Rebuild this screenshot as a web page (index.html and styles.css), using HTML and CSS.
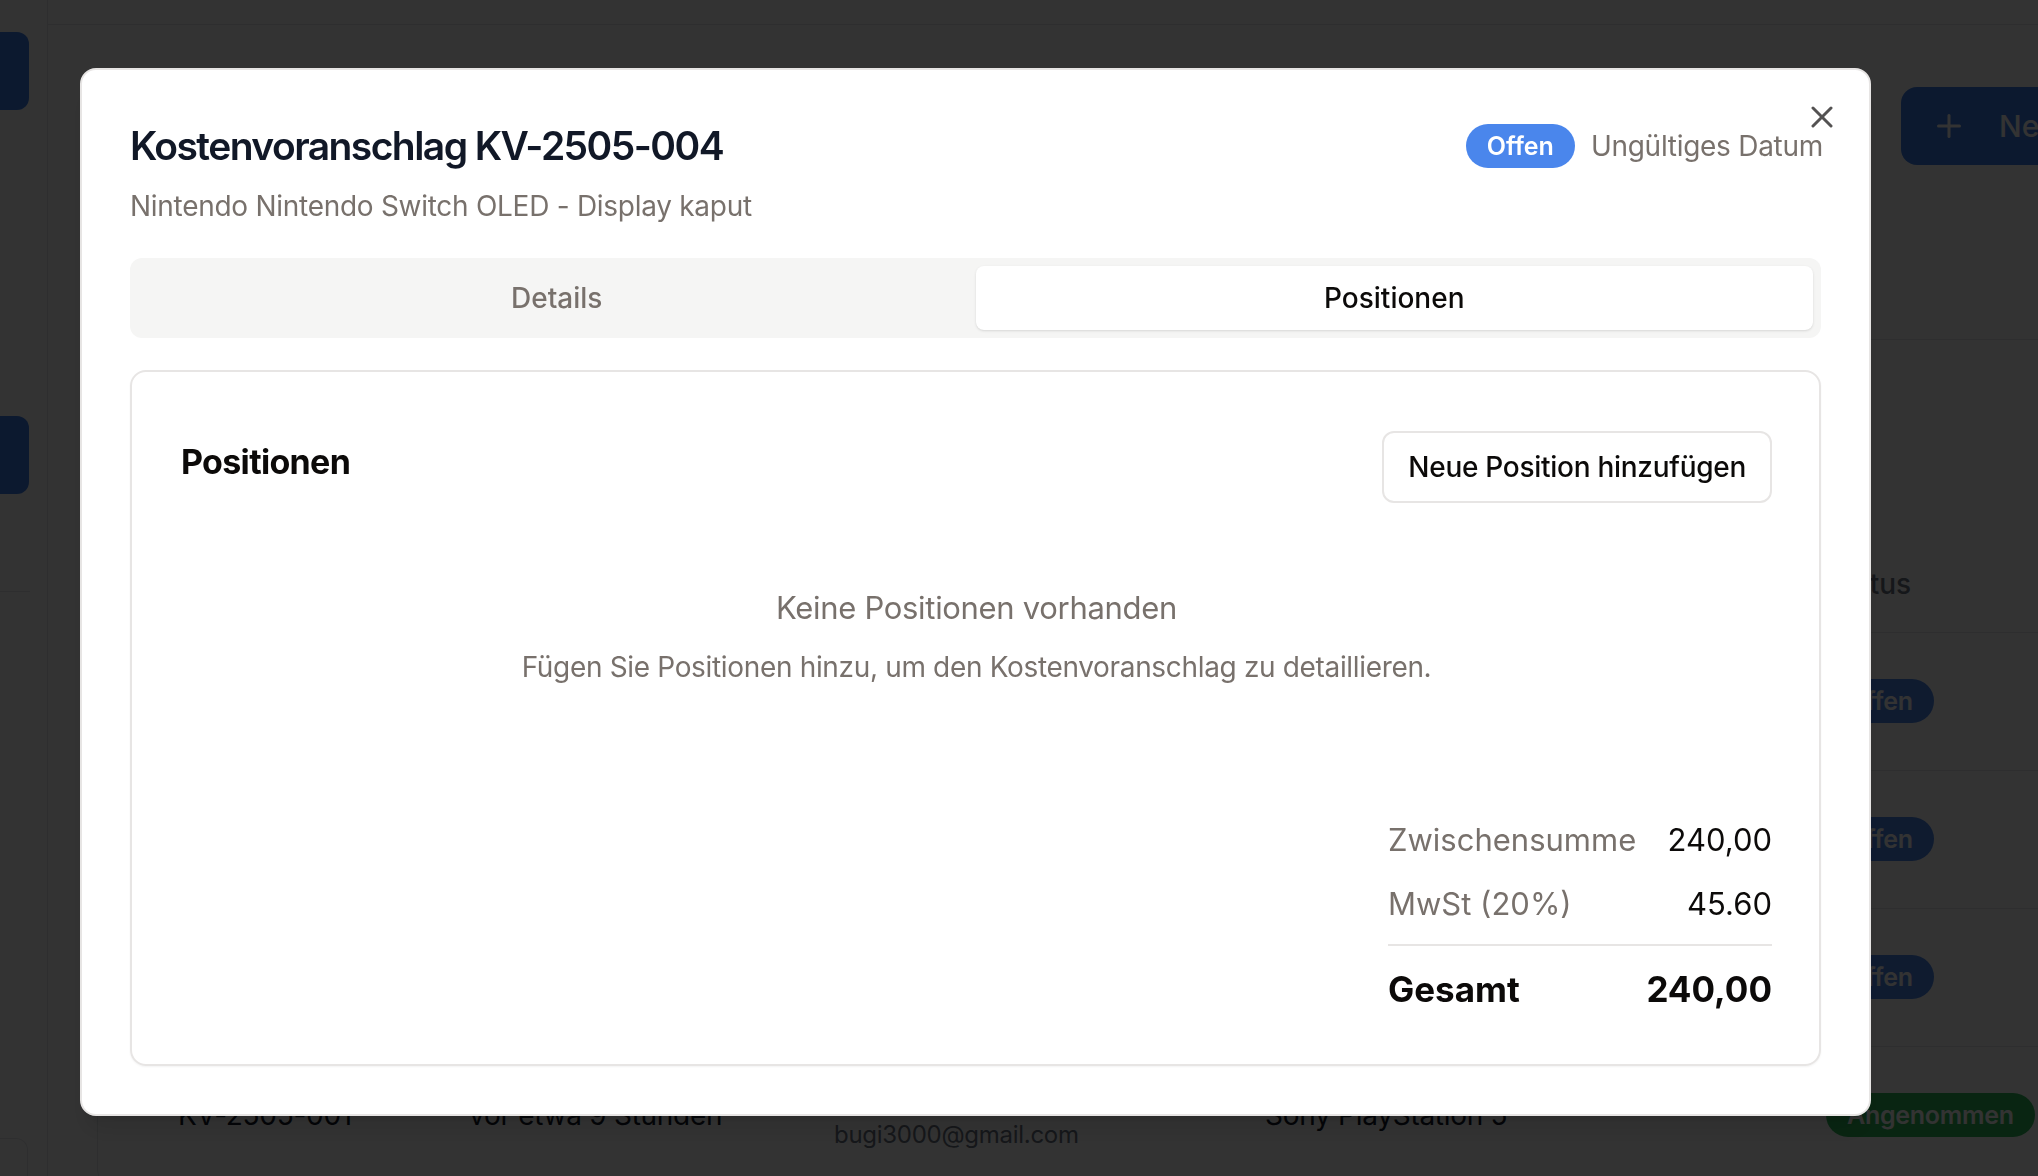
FILE: index.html
```html
<!DOCTYPE html>
<html lang="de">
<head>
<meta charset="utf-8">
<title>Kostenvoranschlag KV-2505-004</title>
<link rel="stylesheet" href="styles.css">
</head>
<body>
<div class="app">
  <aside class="sidebar">
    <div class="side-item"></div>
    <div class="side-item side-item-mid"></div>
    <div class="side-sep"></div>
    <div class="side-foot"></div>
  </aside>
  <div class="main">
    <div class="topbar"></div>
    <div class="page">
      <div class="page-head">
        <h1 class="page-title">Kostenvoranschläge</h1>
        <button class="btn-new">
          <svg class="btn-new-icon" viewBox="0 0 24 24" fill="none" stroke="currentColor" stroke-width="2" stroke-linecap="round"><path d="M12 5v14"/><path d="M5 12h14"/></svg>
          <span>Neuer Kostenvoranschlag</span>
        </button>
      </div>
      <div class="table-card">
        <table class="table">
          <colgroup>
            <col class="c1"><col class="c2"><col class="c3"><col class="c4"><col>
          </colgroup>
          <thead>
            <tr><th>Nummer</th><th>Erstellt</th><th>Kunde</th><th>Gerät</th><th>Status</th></tr>
          </thead>
          <tbody>
            <tr>
              <td>KV-2505-004</td><td>vor etwa 1 Stunde</td>
              <td><div class="cust-name">Max Mustermann</div><div class="cust-mail">max@example.com</div></td>
              <td>Nintendo Switch OLED</td><td><span class="badge badge-blue">Offen</span></td>
            </tr>
            <tr>
              <td>KV-2505-003</td><td>vor etwa 3 Stunden</td>
              <td><div class="cust-name">Anna Berger</div><div class="cust-mail">anna@example.com</div></td>
              <td>Apple iPhone 13</td><td><span class="badge badge-blue">Offen</span></td>
            </tr>
            <tr>
              <td>KV-2505-002</td><td>vor etwa 5 Stunden</td>
              <td><div class="cust-name">Lukas Huber</div><div class="cust-mail">lukas@example.com</div></td>
              <td>Samsung Galaxy S21</td><td><span class="badge badge-blue">Offen</span></td>
            </tr>
            <tr>
              <td>KV-2505-001</td><td>vor etwa 9 Stunden</td>
              <td><div class="cust-name">Bugi</div><div class="cust-mail">bugi3000@gmail.com</div></td>
              <td>Sony PlayStation 5</td><td><span class="badge badge-green">Angenommen</span></td>
            </tr>
          </tbody>
        </table>
      </div>
    </div>
  </div>
</div>

<div class="overlay"></div>

<div class="dialog" role="dialog">
  <div class="dlg-head">
    <div class="dlg-titles">
      <h2 class="dlg-title">Kostenvoranschlag KV-2505-004</h2>
      <p class="dlg-sub">Nintendo Nintendo Switch OLED - Display kaput</p>
    </div>
    <div class="dlg-meta">
      <span class="badge badge-blue">Offen</span>
      <span class="dlg-date">Ungültiges Datum</span>
    </div>
  </div>

  <div class="tabs">
    <button class="tab">Details</button>
    <button class="tab tab-active">Positionen</button>
  </div>

  <div class="card">
    <div class="card-head">
      <h3 class="card-title">Positionen</h3>
      <button class="btn-outline">Neue Position hinzufügen</button>
    </div>
    <div class="empty">
      <p class="empty-title">Keine Positionen vorhanden</p>
      <p class="empty-text">Fügen Sie Positionen hinzu, um den Kostenvoranschlag zu detaillieren.</p>
    </div>
    <div class="totals">
      <div class="totals-row"><span class="t-label">Zwischensumme</span><span class="t-value">240,00</span></div>
      <div class="totals-row"><span class="t-label">MwSt (20%)</span><span class="t-value">45.60</span></div>
      <div class="totals-row totals-sum"><span>Gesamt</span><span>240,00</span></div>
    </div>
  </div>

  <button class="dlg-close" aria-label="Schließen">
    <svg viewBox="0 0 24 24" fill="none" stroke="currentColor" stroke-width="2" stroke-linecap="round" stroke-linejoin="round"><path d="M18 6 6 18"/><path d="m6 6 12 12"/></svg>
  </button>
</div>
</body>
</html>
```

FILE: styles.css
```css
* { box-sizing: border-box; }
html, body { margin: 0; }
body {
  width: 2038px;
  height: 1176px;
  overflow: hidden;
  background: #ffffff;
  color: #0c0a09;
  font-family: Inter, "Noto Sans", "Liberation Sans", sans-serif;
}
h1, h2, h3, p { margin: 0; }
button { font-family: inherit; cursor: pointer; }

/* ---------- background page ---------- */
.app { display: flex; height: 1176px; overflow: hidden; }

.sidebar {
  flex: none;
  width: 48px;
  border-right: 1px solid #e5e7eb;
  display: flex;
  flex-direction: column;
  padding-top: 32px;
  overflow: hidden;
}
.sidebar > * { flex: none; }
.side-item { width: 29px; height: 78px; background: #3f7fe8; border-radius: 0 12px 12px 0; }
.side-item-mid { margin-top: 306px; }
.side-sep { margin-top: 97px; width: 30px; height: 1px; background: #e5e7eb; }
.side-foot {
  margin-top: 546px;
  width: 28px;
  height: 80px;
  border: 1px solid #e5e7eb;
  border-left: 0;
  border-radius: 0 12px 0 0;
}

.main { flex: none; width: 2153px; }
.topbar { height: 25px; border-bottom: 1px solid #e5e7eb; }
.page { padding-left: 49px; }
.page-head {
  display: flex;
  justify-content: space-between;
  align-items: center;
  padding-top: 62px;
}
.page-title { font-size: 48px; font-weight: 700; color: #111827; }
.btn-new {
  width: 300px;
  height: 78px;
  border: 0;
  border-radius: 16px;
  background: #3f7fe8;
  color: #ffffff;
  display: flex;
  align-items: center;
  gap: 32px;
  padding: 0 30px;
  font-size: 30px;
  font-weight: 500;
  white-space: nowrap;
}
.btn-new-icon { width: 36px; height: 36px; flex: none; }

.table-card {
  margin-top: 174px;
  border: 1px solid #e5e7eb;
  border-radius: 16px;
  padding: 196px 48px 0;
}
.table { width: 100%; border-collapse: collapse; table-layout: fixed; font-size: 28px; }
.c1 { width: 291px; }
.c2 { width: 365px; }
.c3 { width: 431px; }
.c4 { width: 561px; }
.table th {
  height: 96px;
  padding: 0 32px;
  text-align: left;
  font-weight: 500;
  color: #6b7280;
}
.table td { height: 138px; padding: 0 32px; color: #111827; letter-spacing: -0.01em; }
.table tr { border-bottom: 1px solid #e5e7eb; }
.cust-name { line-height: 40px; }
.cust-mail { line-height: 40px; font-size: 24px; color: #6b7280; }

.badge {
  display: inline-flex;
  align-items: center;
  height: 44px;
  padding: 0 21px;
  border-radius: 999px;
  font-size: 25px;
  font-weight: 600;
  color: #ffffff;
  white-space: nowrap;
}
.badge-blue { background: #4a86ec; }
.badge-green { background: #2fb95a; }

/* ---------- overlay + dialog ---------- */
.overlay { position: fixed; inset: 0; background: rgba(0, 0, 0, 0.8); }

.dialog {
  position: fixed;
  left: 80px;
  top: 68px;
  width: 1791px;
  padding: 48px;
  background: #ffffff;
  border: 2px solid #e7e5e4;
  border-radius: 16px;
  box-shadow: 0 20px 25px -5px rgba(0,0,0,.1), 0 8px 10px -6px rgba(0,0,0,.1);
}
.dlg-head { display: flex; justify-content: space-between; align-items: flex-start; }
.dlg-title {
  font-size: 39px;
  line-height: 56px;
  font-weight: 600;
  letter-spacing: -0.04em;
  color: #111827;
}
.dlg-sub { margin-top: 12px; font-size: 28px; line-height: 40px; letter-spacing: -0.01em; color: #78716c; }
.dlg-meta { display: flex; align-items: center; gap: 16px; height: 56px; margin-right: -2px; }
.dlg-date { font-size: 28px; line-height: 40px; letter-spacing: -0.01em; color: #78716c; }
.dlg-close {
  position: absolute;
  top: 29px;
  right: 29px;
  width: 36px;
  height: 36px;
  padding: 0;
  border: 0;
  background: none;
  color: #0c0a09;
  opacity: 0.7;
}
.dlg-close svg { width: 36px; height: 36px; display: block; }

.tabs {
  margin-top: 32px;
  display: grid;
  grid-template-columns: 1fr 1fr;
  height: 80px;
  padding: 8px;
  background: #f5f5f4;
  border-radius: 12px;
}
.tab {
  border: 0;
  background: transparent;
  border-radius: 8px;
  font-size: 28px;
  font-weight: 500;
  color: #78716c;
}
.tab-active {
  background: #ffffff;
  color: #0c0a09;
  box-shadow: 0 1px 3px rgba(0,0,0,.1), 0 1px 2px -1px rgba(0,0,0,.1);
}

.card {
  margin-top: 32px;
  border: 2px solid #e7e5e4;
  border-radius: 16px;
  padding: 59px 47px 47px 49px;
  box-shadow: 0 1px 2px rgba(0,0,0,.05);
}
.card-head { display: flex; justify-content: space-between; align-items: center; }
.card-title {
  margin-bottom: 10px;
  font-size: 34px;
  line-height: 44px;
  font-weight: 650;
  letter-spacing: -0.02em;
  color: #0c0a09;
}
.btn-outline {
  height: 72px;
  padding: 0 24px;
  border: 2px solid #e7e5e4;
  border-radius: 12px;
  background: #ffffff;
  font-size: 28px;
  font-weight: 500;
  letter-spacing: -0.01em;
  color: #0c0a09;
}

.empty { margin-top: 81px; text-align: center; color: #78716c; }
.empty-title { font-size: 31px; line-height: 48px; letter-spacing: -0.01em; }
.empty-text { margin-top: 15px; font-size: 28px; line-height: 40px; letter-spacing: -0.012em; }

.totals { width: 384px; margin: 129px 0 0 auto; }
.totals-row {
  display: flex;
  justify-content: space-between;
  font-size: 31px;
  line-height: 48px;
}
.totals-row + .totals-row { margin-top: 16px; }
.t-label { color: #78716c; }
.t-value { color: #0c0a09; }
.totals-sum {
  border-top: 2px solid #e7e5e4;
  padding-top: 15px;
  font-size: 35px;
  line-height: 56px;
  font-weight: 700;
  color: #0c0a09;
}
```
